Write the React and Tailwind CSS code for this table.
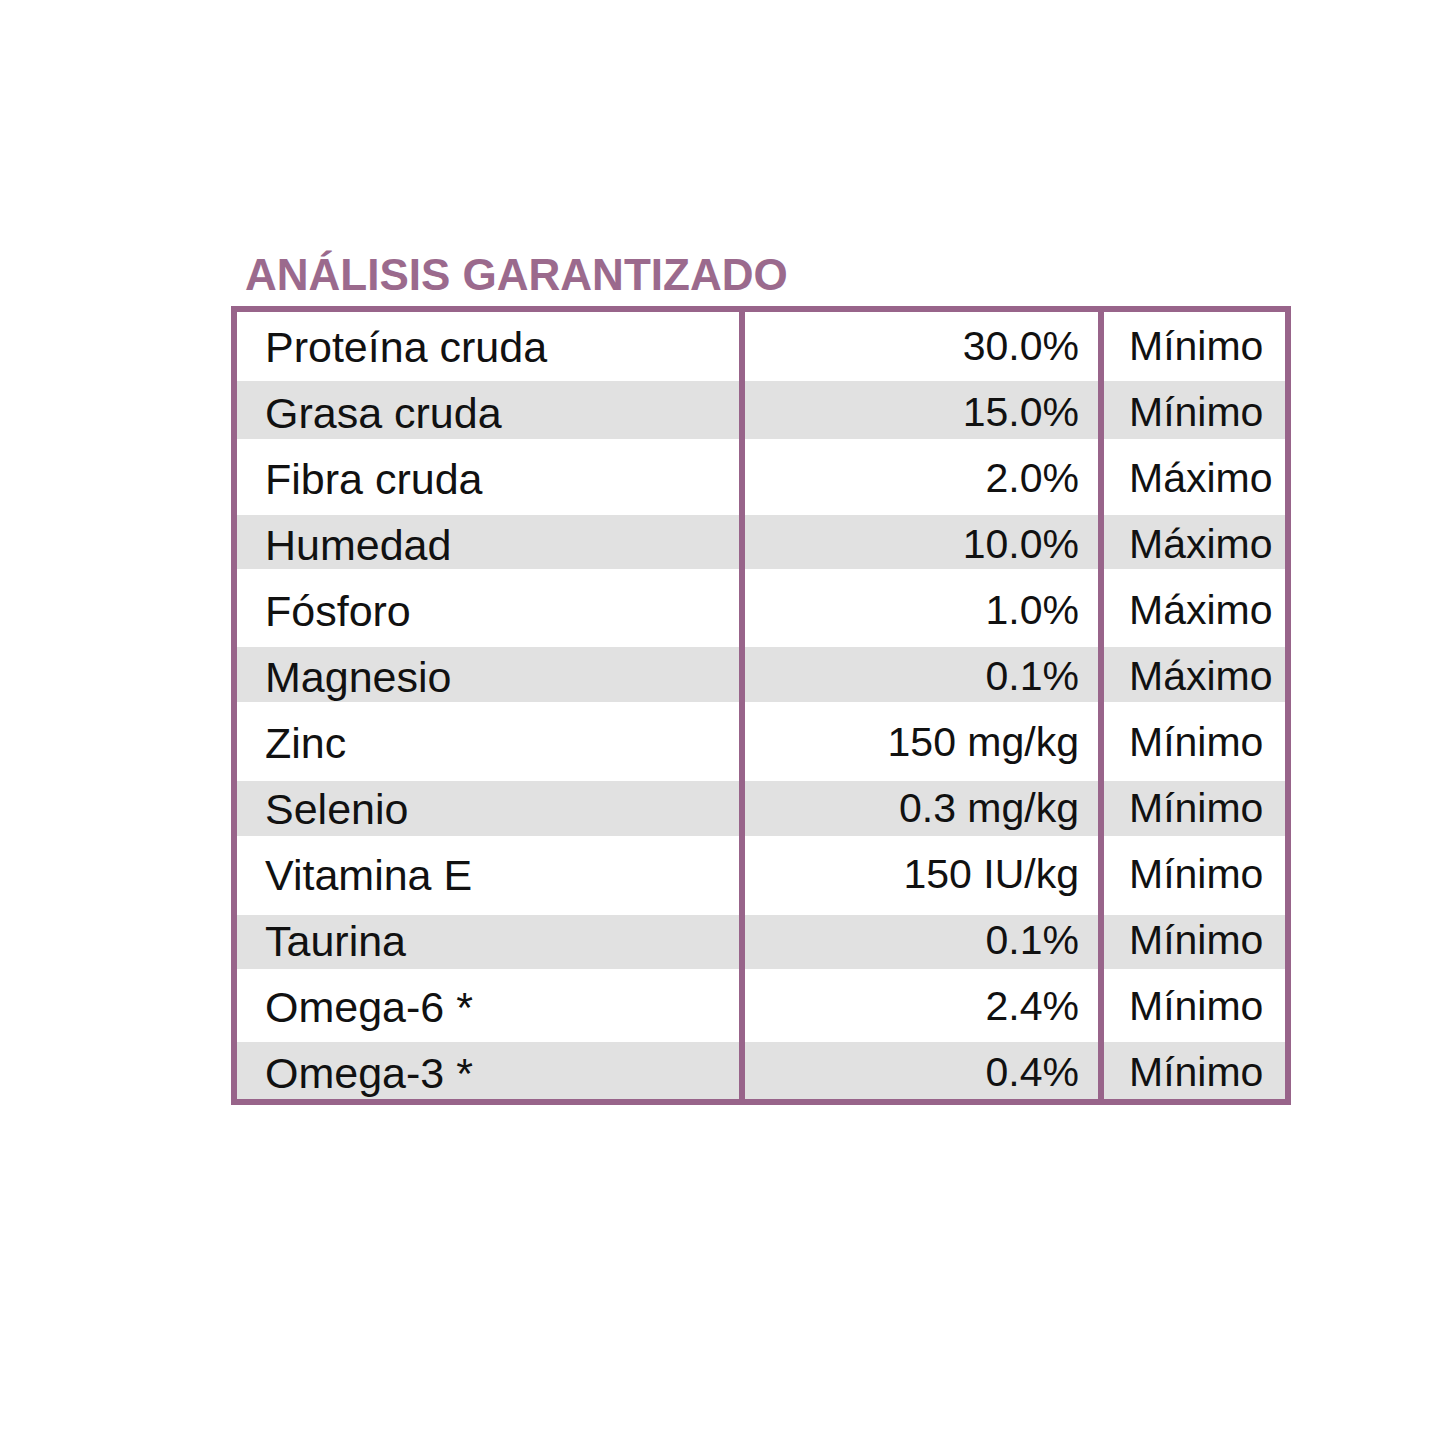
import React from "react";

const rows = [
  { name: "Proteína cruda", val: "30.0%", kind: "Mínimo", row: "h-[69px] bg-white", pad: "pt-[1px]" },
  { name: "Grasa cruda", val: "15.0%", kind: "Mínimo", row: "h-[58px] bg-[#e1e1e1]", pad: "pt-[6px]" },
  { name: "Fibra cruda", val: "2.0%", kind: "Máximo", row: "h-[76px] bg-white", pad: "pt-[4px]" },
  { name: "Humedad", val: "10.0%", kind: "Máximo", row: "h-[54px] bg-[#e1e1e1]", pad: "pt-[6px]" },
  { name: "Fósforo", val: "1.0%", kind: "Máximo", row: "h-[78px] bg-white", pad: "pt-[6px]" },
  { name: "Magnesio", val: "0.1%", kind: "Máximo", row: "h-[55px] bg-[#e1e1e1]", pad: "pt-[5px]" },
  { name: "Zinc", val: "150 mg/kg", kind: "Mínimo", row: "h-[79px] bg-white", pad: "pt-[3px]" },
  { name: "Selenio", val: "0.3 mg/kg", kind: "Mínimo", row: "h-[55px] bg-[#e1e1e1]", pad: "pt-[1px]" },
  { name: "Vitamina E", val: "150 IU/kg", kind: "Mínimo", row: "h-[79px] bg-white", pad: "pb-[1px]" },
  { name: "Taurina", val: "0.1%", kind: "Mínimo", row: "h-[54px] bg-[#e1e1e1]", pad: "pb-[2px]" },
  { name: "Omega-6 *", val: "2.4%", kind: "Mínimo", row: "h-[73px] bg-white", pad: "pt-[3px]" },
  { name: "Omega-3 *", val: "0.4%", kind: "Mínimo", row: "h-[57px] bg-[#e1e1e1]", pad: "pt-[5px]" },
];

export default function App() {
  return (
    <div className="w-[1445px] h-[1445px] bg-white pt-[253px] pl-[231px] font-['Liberation_Sans',Arial,sans-serif]">
      <h1 className="ml-[14px] text-[44px] leading-[44px] font-bold text-[#9b6a8d] whitespace-nowrap">
        ANÁLISIS GARANTIZADO
      </h1>
      <div className="mt-[9px] w-[1060px] border-[6px] border-[#98648a] flex flex-col text-[#111]">
        {rows.map((r) => (
          <div key={r.name} className={`flex ${r.row}`}>
            <div className={`w-[502px] flex items-center pl-[28px] text-[43px] whitespace-nowrap ${r.pad}`}>
              {r.name}
            </div>
            <div className={`w-[359px] border-l-[6px] border-[#98648a] flex items-center justify-end pr-[19px] text-[41px] whitespace-nowrap ${r.pad}`}>
              {r.val}
            </div>
            <div className={`w-[187px] border-l-[6px] border-[#98648a] flex items-center pl-[25px] text-[41px] whitespace-nowrap ${r.pad}`}>
              {r.kind}
            </div>
          </div>
        ))}
      </div>
    </div>
  );
}
